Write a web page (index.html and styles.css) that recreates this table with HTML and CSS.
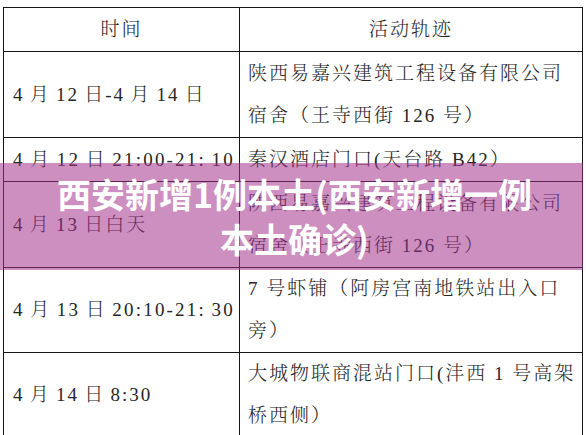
FILE: index.html
```html
<!DOCTYPE html>
<html lang="zh-CN">
<head>
<meta charset="utf-8">
<title>西安新增1例本土</title>
<link rel="stylesheet" href="styles.css">
</head>
<body>
<div class="page">
  <table class="trace">
    <colgroup>
      <col class="col-time">
      <col class="col-place">
    </colgroup>
    <tr class="row-head">
      <th>时间</th>
      <th>活动轨迹</th>
    </tr>
    <tr class="row-tall">
      <td class="time">4 月 12 日-4 月 14 日</td>
      <td>陕西易嘉兴建筑工程设备有限公司<br>宿舍（王寺西街 126 号）</td>
    </tr>
    <tr class="row-short">
      <td class="time time-wide">4 月 12 日 21:00-21: 10</td>
      <td>秦汉酒店门口(天台路 B42）</td>
    </tr>
    <tr class="row-tall">
      <td class="time">4 月 13 日白天</td>
      <td>陕西易嘉兴建筑工程设备有限公司<br>宿舍（王寺西街 126 号）</td>
    </tr>
    <tr class="row-mid">
      <td class="time time-wide">4 月 13 日 20:10-21: 30</td>
      <td>7 号虾铺（阿房宫南地铁站出入口<br>旁）</td>
    </tr>
    <tr class="row-mid">
      <td class="time">4 月 14 日 8:30</td>
      <td>大城物联商混站门口(沣西 1 号高架<br>桥西侧）</td>
    </tr>
  </table>
  <div class="banner">
    <h1 class="banner-title">西安新增1例本土(西安新增一例本土确诊)</h1>
  </div>
</div>
</body>
</html>
```

FILE: styles.css
```css
html, body {
  margin: 0;
  padding: 0;
  background: #ffffff;
}

.page {
  position: relative;
  width: 586px;
  height: 435px;
  overflow: hidden;
  padding: 7px 0 0 3px;
  box-sizing: border-box;
}

.trace {
  border-collapse: collapse;
  table-layout: fixed;
  width: 579px;
  font-family: "Liberation Serif", "Noto Serif CJK SC", "Noto Sans CJK SC", serif;
  font-weight: 300;
  font-size: 19px;
  letter-spacing: 2px;
  color: #262626;
}

.col-time { width: 236px; }
.col-place { width: 343px; }

.trace th,
.trace td {
  border: 1px solid #151515;
  padding: 0 0 0 8px;
  line-height: 42px;
  vertical-align: middle;
  text-align: left;
  white-space: nowrap;
}

.trace th {
  font-weight: 300;
  text-align: center;
  padding: 0;
}

.trace .time {
  padding-left: 9px;
  word-spacing: -1.5px;
}

.trace .time-wide {
  letter-spacing: 2.2px;
}

.row-head { height: 44px; }
.row-tall { height: 86px; }
.row-short { height: 44px; }
.row-mid { height: 83px; }

.banner {
  position: absolute;
  left: 0;
  top: 163px;
  width: 583px;
  height: 107px;
  background: rgba(160, 48, 138, 0.54);
  display: flex;
  align-items: center;
  justify-content: center;
  padding: 0 46px 2px 52px;
  box-sizing: border-box;
}

.banner-title {
  margin: 0;
  font-family: "Noto Sans CJK SC", "Liberation Sans", sans-serif;
  font-weight: 700;
  font-size: 34px;
  line-height: 45px;
  color: #ffffff;
  text-align: center;
}
```
